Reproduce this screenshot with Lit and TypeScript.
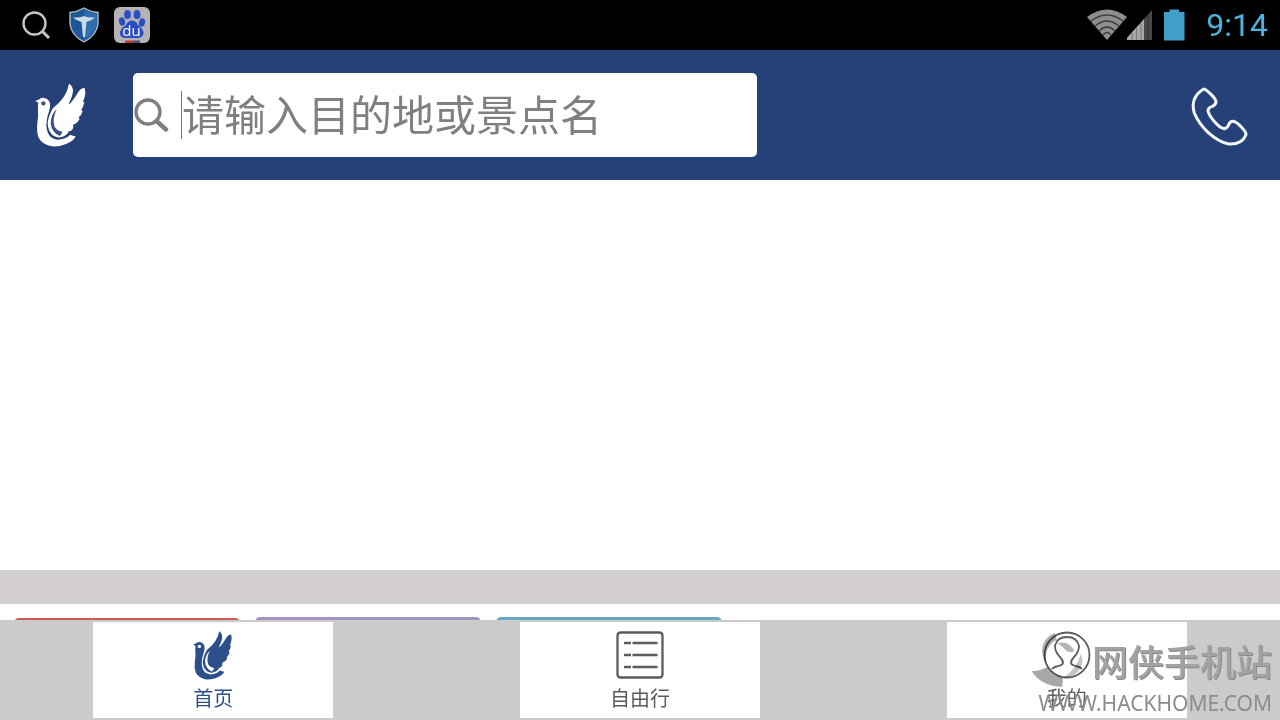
import { LitElement, html, css, svg } from "lit";
import { customElement, property, state } from "lit/decorators.js";
import { classMap } from "lit/directives/class-map.js";

const dove = svg`
  <path fill="currentColor" d="M46 92 L56 89 Q62 82 71 83 Q86 86 90 99 Q92 110 87 124 Q79 146 79 166 Q80 190 93 202 Q106 212 124 208 Q143 203 150 194 Q158 198 167 199 Q160 214 140 221 Q118 231 96 229 Q67 224 56 203 Q49 186 52 160 Q56 140 54 118 Q53 106 55 99 Z"/>
  <path fill="currentColor" d="M147 41 Q157 46 159 60 Q159 78 146 101 L150 101 Q165 84 175 66 Q182 54 194 54 Q198 68 194 81 L189 95 Q191 96 193 96 Q191 110 184 119 Q186 122 188 122 Q185 136 176 142 Q176 145 179 146 Q172 160 161 163 Q158 166 160 170 Q159 182 146 184 Q144 194 128 200 Q112 206 98 196 Q83 181 83 160 Q85 138 99 114 Q122 96 133 78 Q144 60 147 41 Z"/>
  <path class="cut" d="M110 118 Q93 132 92 160 Q95 188 119 198 Q127 191 127 184 Q113 184 104 170 Q96 148 110 118 Z"/>
  <circle class="cut" cx="70" cy="100" r="6.5"/>`;

const listIcon = svg`
  <rect x="0.5" y="0.5" width="45" height="45" rx="3" fill="none" stroke="currentColor" stroke-width="2.3"/>
  <path d="M7 11h7M15.5 11h25M7 23h7M15.5 23h25M7 35h7M15.5 35h25" fill="none" stroke="currentColor" stroke-width="2.4"/>`;

const personIcon = svg`
  <circle cx="24" cy="24" r="22.5" fill="none" stroke="currentColor" stroke-width="1.8"/>
  <path d="M9 38C12 34 19 36 20 32Q20 29 17 26Q12 21 12 15Q14 6 24 6Q34 6 36 15Q36 21 31 26Q28 29 28 32C29 36 36 34 39 38" fill="none" stroke="currentColor" stroke-width="1.8"/>`;

interface Tab {
  id: string;
  label: string;
  viewBox: string;
  icon: unknown;
}

const tabs: Tab[] = [
  { id: "home", label: "首页", viewBox: "45 36 156 195", icon: dove },
  { id: "free", label: "自由行", viewBox: "-1 -1 48 48", icon: listIcon },
  { id: "mine", label: "我的", viewBox: "0 0 48 48", icon: personIcon },
];

@customElement("status-bar")
class StatusBar extends LitElement {
  static styles = css`
    :host {
      display: flex;
      align-items: center;
      justify-content: space-between;
      height: 50px;
      padding: 0 12px 0 20px;
      background: #000;
      flex: none;
    }
    .group { display: flex; align-items: center; }
    .notices { gap: 13px; }
    .time {
      font: 32px/50px Roboto, sans-serif;
      color: #4ab4dc;
      padding-left: 20px;
    }
    svg { display: block; }
    .du { font: 15px "Open Sans", sans-serif; fill: #fff; }
    .battery { padding-left: 10px; }
  `;

  render() {
    return html`
      <div class="group notices">
        <svg width="32" height="36" viewBox="0 0 32 36" fill="none" stroke="#c4c4c4">
          <circle cx="14.5" cy="16.5" r="11" stroke-width="2.4" />
          <path d="M22 24l7 7" stroke-width="3" />
        </svg>
        <svg width="36" height="36" viewBox="0 0 36 36">
          <path d="M19 1Q26 5 33 5.5V17Q32 28 19 35Q6 28 5 17V5.5Q12 5 19 1Z" fill="#1d5998" stroke="#b3bdc5" stroke-width="1.4" />
          <path d="M19 3Q26 6 31.5 7V17Q30 27 19 33Z" fill="#2f6dac" />
          <path d="M8 10.5Q15 11 19 9Q23 11 30 10.5Q26 14 21.5 15L20 30H18L16.500 15Q12 14 8 10.5Z" fill="#c9dae8" />
        </svg>
        <svg width="36" height="36" viewBox="0 0 36 36">
          <rect width="36" height="36" rx="6" fill="#b4b2b2" />
          <g fill="#2a4fc4">
            <ellipse cx="13.5" cy="7.5" rx="3.4" ry="4.6" />
            <ellipse cx="23" cy="7.5" rx="3.4" ry="4.6" />
            <ellipse cx="8" cy="14.5" rx="3" ry="4.2" transform="rotate(-15 8 14.5)" />
            <ellipse cx="28" cy="15.5" rx="3" ry="4.2" transform="rotate(15 28 15.5)" />
            <path d="M18 13.5Q22 13.5 24 18Q30 22 29.5 27Q28 31.5 22 31H13Q7 31.5 6 27Q5.5 22 12 18Q14 13.5 18 13.5Z" />
          </g>
          <text class="du" x="17.5" y="29" text-anchor="middle">du</text>
          <path d="M11 33.5h8v2.5h-8z" fill="#c33d2e" />
          <path d="M19 33.5h7v2.5h-7z" fill="#4b4a86" />
        </svg>
      </div>
      <div class="group">
        <svg width="40" height="34" viewBox="0 0 40 34">
          <path d="M0 9Q20-6 40 9L20 32Z" fill="#8e8e8e" />
          <g fill="none" stroke="#3c3c3c" stroke-width="1.5">
            <path d="M4 13Q20 1 36 13M8 18Q20 8 32 18M12 23Q20 15 28 23M16 27Q20 22 24 27" />
          </g>
        </svg>
        <svg width="27" height="34" viewBox="0 0 27 34">
          <path d="M-2 32L17 11V32Z" fill="#a8a8a8" />
          <path d="M17 11L25 2V32H17Z" fill="#484848" />
          <path d="M5 25v7M9.5 20v12M14 15v17" stroke="#7c7c7c" stroke-width="1.2" />
          <path d="M21 8v24" stroke="#333" stroke-width="1" />
        </svg>
        <svg class="battery" width="22" height="34" viewBox="0 0 22 34">
          <path d="M0 4H5.5V1.5H15V4H20.5V32.5H0Z" fill="#429fc8" />
        </svg>
        <time class="time">9:14</time>
      </div>
    `;
  }
}

@customElement("search-header")
class SearchHeader extends LitElement {
  static styles = css`
    :host {
      display: flex;
      align-items: center;
      height: 130px;
      padding: 0 32px 0 35px;
      box-sizing: border-box;
      background: #264177;
      flex: none;
    }
    svg { display: block; }
    .logo { color: #fff; flex: none; }
    .cut { fill: #3b5283; }
    .search {
      display: flex;
      align-items: center;
      flex: 0 1 624px;
      min-width: 0;
      height: 84px;
      margin-left: 46px;
      border-radius: 5px;
      background: #fff;
    }
    .glass { flex: none; }
    .caret { flex: none; width: 1px; height: 48px; margin-left: 12px; background: #777; }
    .field {
      flex: 1;
      min-width: 0;
      box-sizing: border-box;
      height: 84px;
      padding: 0 0 6px;
      border: 0;
      outline: 0;
      background: transparent;
      color: #333;
      font: 42px "Noto Sans CJK SC", sans-serif;
    }
    .field::placeholder { color: #808080; opacity: 1; }
    .call {
      margin-left: auto;
      padding: 4px 0 0;
      border: 0;
      background: none;
      color: #f2f6ff;
    }
  `;

  render() {
    return html`
      <svg class="logo" width="52" height="65" viewBox="45 39 156 195">${dove}</svg>
      <label class="search">
        <svg class="glass" width="36" height="40" viewBox="0 0 36 40" fill="none" stroke="#808080">
          <circle cx="15" cy="17" r="12" stroke-width="3.4" />
          <path d="M23.5 26L33 34.5" stroke-width="4.4" stroke-linecap="round" />
        </svg>
        <span class="caret"></span>
        <input class="field" type="search" aria-label="搜索" placeholder="请输入目的地或景点名" />
      </label>
      <button class="call" aria-label="电话">
        <svg width="58" height="60" viewBox="30 35 174 180">
          <path d="M71 41Q77 41 94 58Q107 71 108 80Q107 89 97 93Q84 97 84 107Q87 121 107 143Q122 159 133 160Q143 158 146 148Q150 138 160 138Q170 140 184 155Q198 169 198 178Q193 191 181 199Q165 208 146 206Q116 200 84 171Q55 143 43 113Q36 91 43 72Q51 53 71 41Z"
            fill="none" stroke="currentColor" stroke-width="9" stroke-linejoin="round" />
        </svg>
      </button>
    `;
  }
}

@customElement("tab-bar")
class TabBar extends LitElement {
  static styles = css`
    :host {
      display: grid;
      grid-template-columns: repeat(3, 1fr);
      justify-items: center;
      padding: 2px 0;
      background: #cbcbcb;
      flex: none;
    }
    .tab {
      display: flex;
      flex-direction: column;
      align-items: center;
      gap: 4px;
      width: 240px;
      max-width: 100%;
      height: 96px;
      padding: 8px 0 0;
      border: 0;
      background: #fff;
      color: #5c5c5c;
      font: 20px/28px "Noto Sans CJK SC", sans-serif;
    }
    .tab svg { display: block; width: 48px; height: 50px; }
    .active { color: #2c4f8a; }
    .cut { fill: #fff; }
  `;

  @property() active = "home";

  render() {
    return tabs.map(
      (t) => html`
        <button
          class=${classMap({ tab: true, active: t.id === this.active })}
          @click=${() => this.dispatchEvent(new CustomEvent("pick", { detail: t.id }))}
        >
          <svg viewBox=${t.viewBox}>${t.icon}</svg>
          <span>${t.label}</span>
        </button>
      `
    );
  }
}

@customElement("app-root")
class AppRoot extends LitElement {
  static styles = css`
    :host {
      display: flex;
      flex-direction: column;
      position: relative;
      height: 100vh;
      overflow: hidden;
      background: #fff;
    }
    .banner { flex: 1; }
    .band { height: 34px; background: #d3ced1; flex: none; }
    .tiles {
      display: flex;
      align-items: flex-start;
      gap: 15px;
      height: 16px;
      padding: 0 14px;
      box-sizing: border-box;
      overflow: hidden;
      flex: none;
    }
    .tile { width: 226px; height: 120px; margin-top: 13px; border-radius: 5px; flex: none; }
    .red { background: #cc5c50; margin-top: 14px; }
    .purple { background: #a394bd; }
    .blue { background: #66a9c0; }
    .mark {
      position: absolute;
      right: 8px;
      bottom: 2px;
      display: flex;
      flex-direction: column;
      align-items: flex-end;
      pointer-events: none;
    }
    .brand {
      display: flex;
      align-items: center;
      color: #a2a2a2;
      font: 500 36px/56px "Noto Sans CJK SC", sans-serif;
      text-shadow: 1px 1px 0 #8a8a8a;
    }
    .swirl { mix-blend-mode: multiply; }
    .url {
      color: #8c8c8c;
      font: 21px/30px "Noto Sans", sans-serif;
    }
  `;

  @state() private active = "home";

  render() {
    return html`
      <status-bar></status-bar>
      <search-header></search-header>
      <main class="banner"></main>
      <div class="band"></div>
      <div class="tiles">
        <div class="tile red"></div>
        <div class="tile purple"></div>
        <div class="tile blue"></div>
      </div>
      <tab-bar .active=${this.active} @pick=${(e: CustomEvent) => (this.active = e.detail)}></tab-bar>
      <div class="mark">
        <div class="brand">
          <svg class="swirl" width="61" height="56" viewBox="30 38 183 168">
            <path d="M101 41Q73 51 64 82Q60 106 75 132Q70 98 88 76Q96 66 108 62Z" fill="#b0b0b0" />
            <path d="M32 155Q55 157 78 143Q96 167 126 176L124 202Q98 203 76 193Q47 181 32 155Z" fill="#a8a8a8" />
            <path d="M108 72Q142 62 160 94Q148 105 133 92Q126 81 108 72Z" fill="#b4b4b4" />
            <path d="M180 104Q193 137 166 162Q150 176 126 176Q164 153 180 104Z" fill="#c4c4c4" />
          </svg>
          <span>网侠手机站</span>
        </div>
        <span class="url">WWW.HACKHOME.COM</span>
      </div>
    `;
  }
}
